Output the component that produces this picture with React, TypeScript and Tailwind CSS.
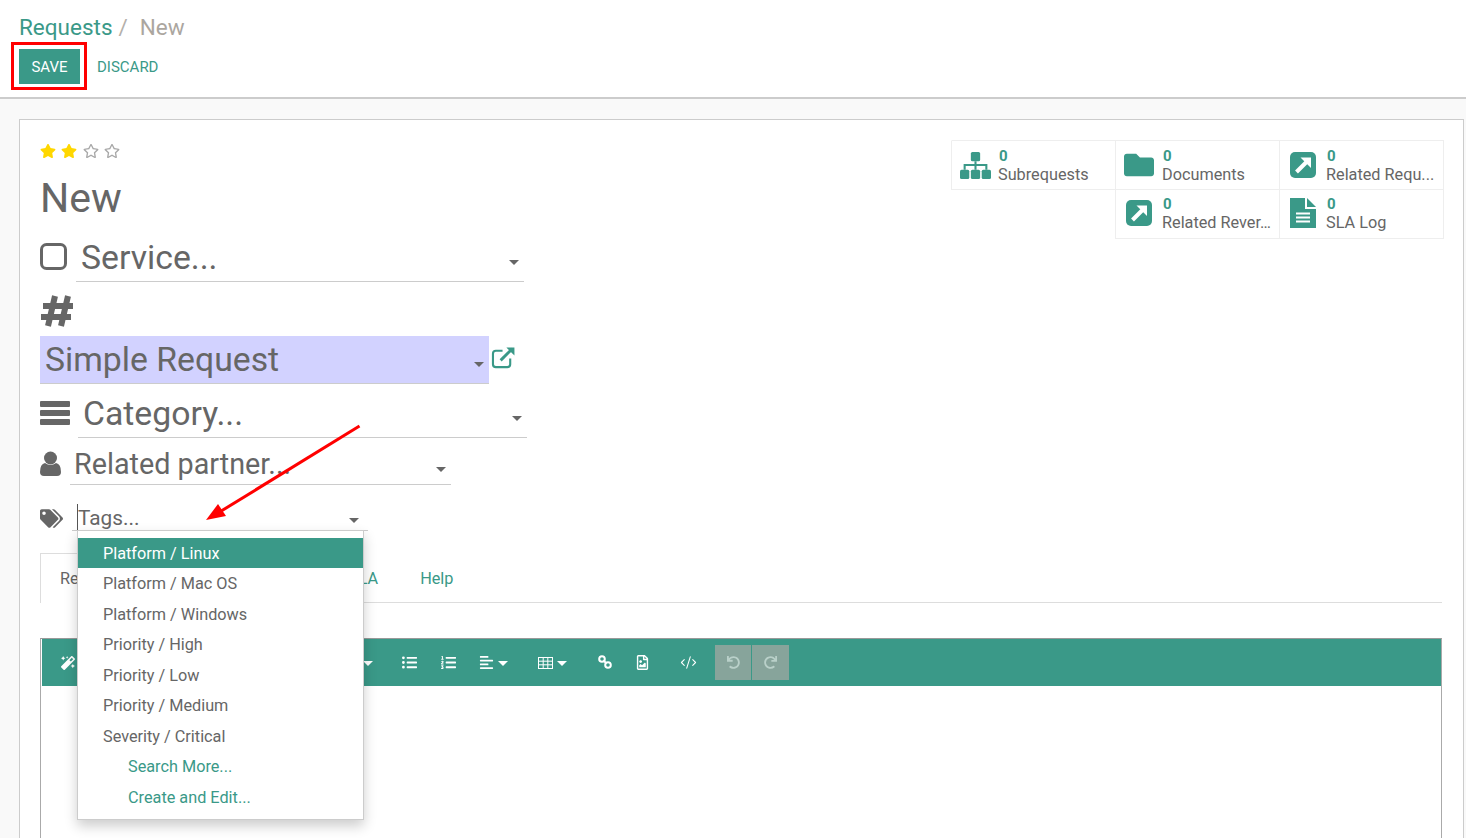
import React from 'react';
import { FaStar, FaRegStar, FaTags, FaFolder, FaMagic, FaListUl, FaListOl, FaAlignLeft, FaRegFileImage, FaUndo, FaRedo } from 'react-icons/fa';
import { CodeXml } from 'lucide-react';

const GREEN = 'text-[#3a9988]';

const Caret = ({ className = '' }: { className?: string }) => (
  <span className={`inline-block w-0 h-0 border-x-[5px] border-x-transparent border-t-[5px] border-t-[#666] ${className}`} />
);

const WhiteCaret = ({ className = '' }: { className?: string }) => (
  <span className={`inline-block w-0 h-0 border-x-[5px] border-x-transparent border-t-[5px] border-t-white ${className}`} />
);

// Font Awesome 4 glyphs that the packages only have in a different cut
const ArrowSquare = () => (
  <svg viewBox="0 0 28 28" className="w-[28px] h-[28px] text-[#3a9988]">
    <rect x="1" y="1" width="26" height="26" rx="5" fill="currentColor" />
    <path d="M7.5 21 L18.5 10" stroke="#fff" strokeWidth="4" fill="none" />
    <path d="M11.5 6.5 H22 V17 Z" fill="#fff" />
  </svg>
);

const ExternalLink = () => (
  <svg viewBox="0 0 26 24" className="w-[25px] h-[23px] text-[#3a9988]" fill="none" stroke="currentColor" strokeWidth="2.2">
    <path d="M20 13 V19 Q20 22 17 22 H5 Q2 22 2 19 V8 Q2 5 5 5 H12" />
    <path d="M10 15 L22 3" strokeWidth="3" />
    <path d="M16 1.6 H24.4 V10 Z" fill="currentColor" stroke="none" />
  </svg>
);

const Sitemap = () => (
  <svg viewBox="0 0 30 26" className="w-[31px] h-[27px]" fill="currentColor">
    <rect x="10.5" y="0" width="9" height="9" rx="1.5" />
    <rect x="0" y="17" width="9" height="9" rx="1.5" />
    <rect x="10.5" y="17" width="9" height="9" rx="1.5" />
    <rect x="21" y="17" width="9" height="9" rx="1.5" />
    <path d="M15 9 V17 M4.5 17 V12.5 H25.5 V17" stroke="currentColor" strokeWidth="2" fill="none" />
  </svg>
);

const FileDoc = () => (
  <svg viewBox="0 0 26 30" className="w-[26px] h-[30px]" fill="currentColor">
    <path d="M0 0 H15 V11 H26 V30 H0 Z" />
    <path d="M17 0 L26 9 H17 Z" />
    <path d="M6 15.5 H20 M6 19.5 H20 M6 23.5 H20" stroke="#fff" strokeWidth="2" fill="none" />
  </svg>
);

const Hash = () => (
  <svg viewBox="0 0 34 32" className="w-[34px] h-[32px] mt-[13px] mb-[9px]" fill="none" stroke="currentColor" strokeWidth="6">
    <path d="M15 1 L8 31 M28 1 L21 31 M3 11 H33 M1 22 H31" />
  </svg>
);

const Bars = () => (
  <svg viewBox="0 0 30 24" className="w-[30px] h-[24px]" fill="currentColor">
    <rect x="0" y="0" width="30" height="6" rx="1" />
    <rect x="0" y="9" width="30" height="6" rx="1" />
    <rect x="0" y="18" width="30" height="6" rx="1" />
  </svg>
);

const UserIcon = () => (
  <svg viewBox="0 0 21 25" className="w-[21px] h-[25px]" fill="currentColor">
    <circle cx="10.5" cy="7" r="6.5" />
    <path d="M0 21 Q0 13 5 12 Q10.5 16 16 12 Q21 13 21 21 Q21 25 17 25 H4 Q0 25 0 21 Z" />
  </svg>
);

const TableIcon = () => (
  <svg viewBox="0 0 15 12" className="w-[15px] h-[12px]" fill="none" stroke="currentColor" strokeWidth="1">
    <rect x="0.5" y="0.5" width="14" height="11" />
    <path d="M5.2 0.5 V11.5 M9.8 0.5 V11.5 M0.5 4.2 H14.5 M0.5 7.8 H14.5" />
  </svg>
);

const ChainIcon = () => (
  <svg viewBox="0 0 14 14" className="w-[14px] h-[14px]" fill="none" stroke="currentColor" strokeWidth="2">
    <circle cx="4" cy="4" r="2.8" />
    <circle cx="10" cy="10" r="2.8" />
    <path d="M5.5 5.5 L8.5 8.5" />
  </svg>
);

function StatButton({ icon, label, className = '' }: { icon: React.ReactNode; label: string; className?: string }) {
  return (
    <div className={`flex items-center h-[49px] border-r border-b border-[#eee] overflow-hidden ${className}`}>
      <div className="w-[46px] shrink-0 flex justify-center text-[#3a9988]">{icon}</div>
      <div className="min-w-0 leading-[19px]">
        <div className={`text-[15px] font-bold pt-[2px] pl-px leading-[17px] ${GREEN}`}>0</div>
        <div className="text-[16.25px] text-[#666] truncate w-[110px]">{label}</div>
      </div>
    </div>
  );
}

const tags = ['Platform / Mac OS', 'Platform / Windows', 'Priority / High', 'Priority / Low', 'Priority / Medium', 'Severity / Critical'];

export default function App() {
  return (
    <div className="relative h-[838px] overflow-hidden bg-[#f9f9f9] text-[#666] font-['Roboto',sans-serif]">
      {/* Control panel */}
      <div className="h-[99px] bg-white border-b-2 border-b-[#ccc] pl-[19px] pt-[12px]">
        <div className="text-[22.5px] leading-[30px] flex">
          <span className={GREEN}>Requests</span>
          <span className="text-[#b5b0aa] ml-[6px]">/</span>
          <span className="text-[#aba69f] ml-[12px]">New</span>
        </div>
        <div className="flex items-center mt-[7px]">
          <button className="w-[61px] h-[35px] pt-[2px] bg-[#3a9988] text-white text-[15px]">SAVE</button>
          <span className={`ml-[17px] pt-[2px] text-[15px] ${GREEN}`}>DISCARD</span>
        </div>
      </div>

      {/* Sheet */}
      <div className="mt-[20px] ml-[19px] mr-[2px] h-[760px] bg-white border border-[#ccc] pl-[20px] pr-[21px]">
        <div className="flex justify-between">
          <div>
            <div className="flex gap-[5.3px] mt-[23px] text-[16px]">
              <FaStar className="text-[#ffd700]" />
              <FaStar className="text-[#ffd700]" />
              <FaRegStar className="text-[#a8a8a8]" />
              <FaRegStar className="text-[#a8a8a8]" />
            </div>
            <div className="text-[41px] leading-[48px] mt-[15px]">New</div>

            <div className="flex mt-[11px]">
              <div className="w-[36px] pt-[10px]">
                <svg viewBox="0 0 27 27" className="w-[27px] h-[27px]" fill="none" stroke="currentColor" strokeWidth="3">
                  <rect x="1.5" y="1.5" width="24" height="24" rx="5" />
                </svg>
              </div>
              <div className="w-[448px] h-[49px] border-b border-b-[#ccc] flex items-center justify-between pl-[5px] pr-[5px]">
                <span className="text-[33.75px] leading-[49px]">Service...</span>
                <Caret className="mt-[11px]" />
              </div>
            </div>

            <Hash />

            <div className="w-[449px] h-[48px] bg-[#d2d2ff] border-b border-b-[#ccc] relative flex items-center justify-between pl-[5px] pr-[5px]">
              <span className="text-[33.75px] leading-[48px]">Simple Request</span>
              <Caret className="mt-[9px]" />
              <span className="absolute left-[451px] top-[10px]"><ExternalLink /></span>
            </div>

            <div className="flex mt-[6px]">
              <div className="w-[38px] pt-[11px]"><Bars /></div>
              <div className="w-[449px] h-[48px] border-b border-b-[#ccc] flex items-center justify-between pl-[5px] pr-[5px]">
                <span className="text-[33.75px] leading-[48px]">Category...</span>
                <Caret className="mt-[9px]" />
              </div>
            </div>

            <div className="flex mt-[6px]">
              <div className="w-[30px] pt-[7px]"><UserIcon /></div>
              <div className="w-[381px] h-[41px] border-b border-b-[#ccc] flex items-center justify-between pl-[4px] pr-[5px]">
                <span className="text-[28.75px] leading-[38px]">Related partner...</span>
                <Caret className="mt-[10px]" />
              </div>
            </div>

            <div className="flex mt-[19px]">
              <div className="w-[32px] pt-[3px]"><FaTags className="text-[23px]" /></div>
              <div className="w-[296px] h-[27px] border-b border-b-[#ccc] flex items-center justify-between pl-[5px] pr-[9px]">
                <span className="text-[20.8px] leading-[26px] pt-px border-l border-l-[#555]">Tags...</span>
                <Caret className="mt-[7px]" />
              </div>
            </div>
          </div>

          {/* Stat buttons */}
          <div className="grid grid-cols-[164px_164px_164px] w-[493px] h-[99px] mt-[20px] -mr-[2px] mb-auto border-t border-l border-l-transparent border-t-[#eee]">
            <div className="border-l border-l-[#eee] -ml-px"><StatButton icon={<Sitemap />} label="Subrequests" /></div>
            <div><StatButton icon={<FaFolder className="text-[30px]" />} label="Documents" /></div>
            <div><StatButton icon={<ArrowSquare />} label="Related Requ..." /></div>
            <div />
            <div className="border-l border-l-[#eee] -ml-px"><StatButton className="pb-[2px]" icon={<ArrowSquare />} label="Related Rever..." /></div>
            <div><StatButton className="pb-[2px]" icon={<FileDoc />} label="SLA Log" /></div>
          </div>
        </div>

        {/* Notebook tabs */}
        <div className="flex h-[50px] mt-[22px] border-b border-b-[#ddd] text-[16.25px] leading-[50px]">
          <div className="w-[96px] h-[50px] bg-white border-l border-t border-[#ddd] pl-[19px]">Request</div>
          <div className={`ml-[193px] px-[20px] pt-px ${GREEN}`}>SLA</div>
          <div className={`ml-[2px] px-[20px] pt-px ${GREEN}`}>Help</div>
        </div>

        {/* Editor */}
        <div className="mt-[35px] h-[300px] border-x border-x-[#aaa] border-t border-t-[#999] pl-px">
          <div className="h-[47px] bg-[#3a9988] flex items-center text-white">
            <FaMagic className="text-[14px] ml-[19px]" />
            <WhiteCaret className="ml-[288px] mt-[1px]" />
            <FaListUl className="text-[15px] ml-[29px]" />
            <FaListOl className="text-[15px] ml-[24px]" />
            <FaAlignLeft className="text-[15px] ml-[23px]" />
            <WhiteCaret className="ml-[4px] mt-[1px]" />
            <span className="ml-[30px]"><TableIcon /></span>
            <WhiteCaret className="ml-[4px] mt-[1px]" />
            <span className="ml-[31px] -mt-[2px]"><ChainIcon /></span>
            <FaRegFileImage className="text-[15px] ml-[23px]" />
            <CodeXml size={17} strokeWidth={1.5} className="ml-[30px]" />
            <div className="flex ml-[18px] h-[35px] gap-[1px] text-[#b9d0c9]">
              <div className="w-[36px] bg-[#87a49b] flex items-center justify-center"><FaUndo className="text-[13px]" /></div>
              <div className="w-[37px] bg-[#87a49b] flex items-center justify-center"><FaRedo className="text-[13px]" /></div>
            </div>
          </div>
        </div>
      </div>

      {/* Autocomplete dropdown */}
      <div className="absolute left-[77px] top-[530px] w-[287px] h-[290px] bg-white border border-[#ccc] shadow-[0_6px_12px_rgba(0,0,0,0.2)] pt-[7px] text-[16.25px]">
        <div className="h-[30px] mb-px leading-[31px] pl-[25px] bg-[#3a9988] text-white">Platform / Linux</div>
        {tags.map((t) => (
          <div key={t} className="h-[30.5px] leading-[30px] pl-[25px]">{t}</div>
        ))}
        <div className={`h-[30.5px] leading-[30px] pl-[50px] ${GREEN}`}>Search More...</div>
        <div className={`h-[30.5px] leading-[30px] pl-[50px] ${GREEN}`}>Create and Edit...</div>
      </div>

      {/* Annotations */}
      <div className="absolute left-[11px] top-[42px] w-[76px] h-[48px] border-[3px] border-[#f00] pointer-events-none" />
      <svg className="absolute left-[200px] top-[420px] pointer-events-none" width="170" height="105" viewBox="200 420 170 105">
        <path d="M359.5 426 L218 513" stroke="#f00" strokeWidth="3" fill="none" />
        <path d="M206 520 L218 504 L226 516 Z" fill="#f00" />
      </svg>
    </div>
  );
}
